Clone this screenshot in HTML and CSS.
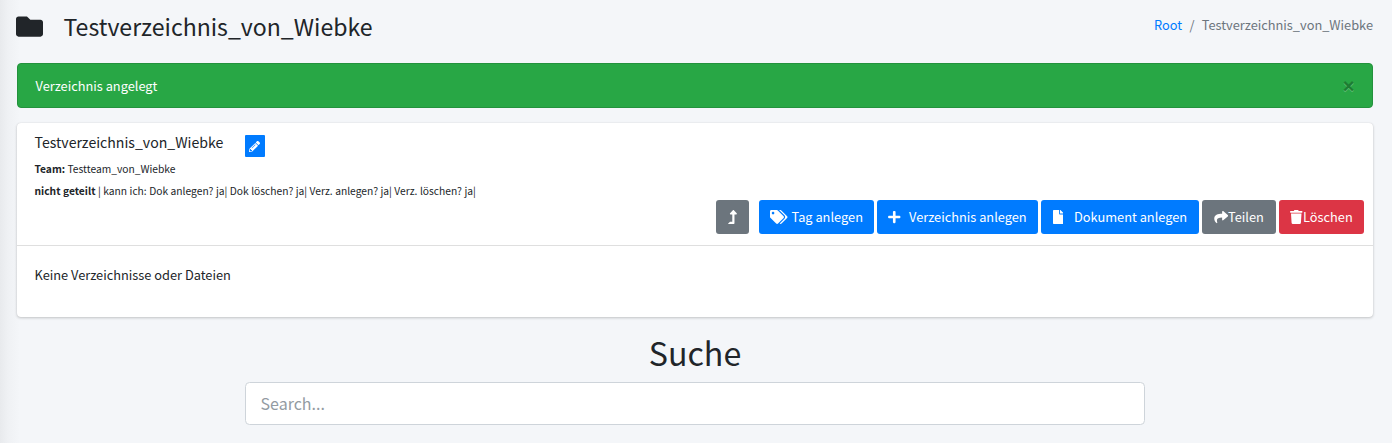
FILE: index.html
```html
<!DOCTYPE html>
<html lang="de">
<head>
<meta charset="utf-8">
<title>Testverzeichnis_von_Wiebke</title>
<link rel="stylesheet" href="styles.css">
</head>
<body>
<main class="content">
  <header class="page-header">
    <svg class="folder" viewBox="0 0 512 512"><path d="M464 128H272l-64-64H48C21.49 64 0 85.49 0 112v288c0 26.51 21.49 48 48 48h416c26.51 0 48-21.49 48-48V176c0-26.51-21.49-48-48-48z"/></svg>
    <h1 class="page-title"><span>Testverzeichnis_von_Wiebke</span></h1>
    <nav class="breadcrumb"><a href="#">Root</a><span class="sep">/</span><span>Testverzeichnis_von_Wiebke</span></nav>
  </header>

  <div class="alert"><span>Verzeichnis angelegt</span><button class="close" type="button">×</button></div>

  <section class="card">
    <div class="card-header">
      <div class="card-title-row">
        <h3 class="card-title">Testverzeichnis_von_Wiebke</h3>
        <a class="edit" href="#"><svg viewBox="0 0 512 512"><path d="M497.9 142.1l-46.1 46.1c-4.7 4.7-12.3 4.7-17 0l-111-111c-4.7-4.7-4.7-12.3 0-17l46.1-46.1c18.7-18.7 49.1-18.7 67.9 0l60.1 60.1c18.8 18.7 18.8 49.1 0 67.9zM284.2 99.8L21.6 362.4.4 483.9c-2.9 16.4 11.4 30.6 27.8 27.8l121.5-21.3 262.6-262.6c4.7-4.7 4.7-12.3 0-17l-111-111c-4.8-4.7-12.4-4.7-17.1 0zM124.1 339.9c-5.5-5.5-5.5-14.3 0-19.8l154-154c5.5-5.5 14.3-5.5 19.8 0s5.5 14.3 0 19.8l-154 154c-5.5 5.5-14.3 5.5-19.8 0zM88 424h48v36.3l-64.5 11.3-31.1-31.1L51.7 376H88v48z"/></svg></a>
      </div>
      <p class="meta team"><b>Team:</b> Testteam_von_Wiebke</p>
      <p class="meta rights"><b>nicht geteilt</b> | kann ich: Dok anlegen? ja| Dok löschen? ja| Verz. anlegen? ja| Verz. löschen? ja|</p>
      <div class="actions">
        <a class="btn secondary up" href="#"><svg class="w-up" viewBox="0 0 320 512"><path d="M313.553 119.669L209.587 7.666c-9.485-10.214-25.676-10.229-35.174 0L70.438 119.669C56.232 134.969 67.062 160 88.025 160H152v272H68.024a11.996 11.996 0 0 0-8.485 3.515l-56 56C-4.021 499.074 1.333 512 12.024 512H208c13.255 0 24-10.745 24-24V160h63.966c20.878 0 31.851-24.969 17.587-40.331z"/></svg></a>
        <a class="btn primary tag" href="#"><svg class="w-tags" viewBox="0 0 640 512"><path d="M497.941 225.941L286.059 14.059A48 48 0 0 0 252.118 0H48C21.49 0 0 21.49 0 48v204.118a48 48 0 0 0 14.059 33.941l211.882 211.882c18.744 18.745 49.136 18.746 67.882 0l204.118-204.118c18.745-18.745 18.745-49.137 0-67.882zM112 160c-26.51 0-48-21.49-48-48s21.49-48 48-48 48 21.49 48 48-21.49 48-48 48zm513.941 133.823L421.823 497.941c-18.745 18.745-49.137 18.745-67.882 0l-.36-.36L527.64 323.522c16.999-16.999 26.362-39.6 26.362-63.64s-9.362-46.641-26.362-63.64L331.397 0h48.721a48 48 0 0 1 33.941 14.059l211.882 211.882c18.745 18.745 18.745 49.137 0 67.882z"/></svg><span>Tag anlegen</span></a>
        <a class="btn primary dir" href="#"><svg class="w-plus" viewBox="0 0 448 512"><path d="M416 208H272V64c0-17.67-14.33-32-32-32h-32c-17.67 0-32 14.33-32 32v144H32c-17.67 0-32 14.33-32 32v32c0 17.67 14.33 32 32 32h144v144c0 17.67 14.33 32 32 32h32c17.67 0 32-14.33 32-32V304h144c17.67 0 32-14.33 32-32v-32c0-17.67-14.33-32-32-32z"/></svg><span>Verzeichnis anlegen</span></a>
        <a class="btn primary doc" href="#"><svg class="w-file" viewBox="0 0 384 512"><path d="M224 136V0H24C10.7 0 0 10.7 0 24v464c0 13.3 10.7 24 24 24h336c13.3 0 24-10.7 24-24V160H248c-13.2 0-24-10.8-24-24zm160-14.1v6.1H256V0h6.1c6.4 0 12.5 2.5 17 7l97.9 98c4.5 4.5 7 10.6 7 16.9z"/></svg><span>Dokument anlegen</span></a>
        <a class="btn secondary share" href="#"><svg class="w-share" viewBox="0 0 512 512"><path d="M503.691 189.836L327.687 37.851C312.281 24.546 288 35.347 288 56.015v80.053C127.371 137.907 0 170.1 0 322.326c0 61.441 39.581 122.309 83.333 154.132 13.653 9.931 33.111-2.533 28.077-18.631C66.066 312.814 132.917 274.316 288 272.085V360c0 20.7 24.3 31.453 39.687 18.164l176.004-152c11.071-9.562 11.086-26.753 0-36.328z"/></svg><span>Teilen</span></a>
        <a class="btn danger trash" href="#"><svg class="w-trash" viewBox="0 0 448 512"><path d="M432 32H312l-9.4-18.7A24 24 0 0 0 281.1 0H166.8a23.72 23.72 0 0 0-21.4 13.3L136 32H16A16 16 0 0 0 0 48v32a16 16 0 0 0 16 16h416a16 16 0 0 0 16-16V48a16 16 0 0 0-16-16zM53.2 467a48 48 0 0 0 47.9 45h245.8a48 48 0 0 0 47.9-45L416 128H32z"/></svg><span>Löschen</span></a>
      </div>
    </div>
    <div class="card-body">Keine Verzeichnisse oder Dateien</div>
  </section>

  <section class="search">
    <h2 class="search-title">Suche</h2>
    <input class="search-input" type="text" placeholder="Search...">
  </section>
</main>
</body>
</html>
```
FILE: styles.css
```css
* { box-sizing: border-box; }
body {
  margin: 0;
  height: 443px;
  overflow: hidden;
  background: linear-gradient(to right, #e8eaed 0, #eff1f4 8px, #f4f6f9 20px);
  color: #212529;
  font-family: "Noto Sans CJK SC", "Noto Sans", sans-serif;
  font-size: 12.8px;
  line-height: 21px;
}
a { text-decoration: none; color: #007bff; }
h1, h2, h3, p { margin: 0; font-weight: 400; }
svg { fill: currentColor; display: block; flex: none; }

.content { padding: 0 19px 0 17px; }
.page-header { display: flex; height: 63px; align-items: flex-start; }
.folder { width: 27px; height: 27px; margin: 13px 20.5px 0 -1px; }
.page-title { font-size: 23.1px; line-height: 30px; margin-top: 11px; }
.breadcrumb { display: flex; margin: 14px 0 0 auto; color: #6c757d; }
.sep { margin: 0 7.3px; }

.alert {
  display: flex;
  justify-content: space-between;
  align-items: center;
  height: 45px;
  padding: 0 17.5px;
  border: 1px solid #23923d;
  border-radius: 4px;
  background: #28a745;
  color: #fff;
}
.close {
  border: 0;
  padding: 0;
  background: none;
  color: #000;
  opacity: .25;
  font: 700 20px/20px "Liberation Sans", sans-serif;
  text-shadow: 0 1px 0 #fff;
}

.card {
  height: 194px;
  margin-top: 15px;
  border-radius: 4px;
  background: #fff;
  box-shadow: 0 0 1px rgba(0, 0, 0, .125), 0 1px 3px rgba(0, 0, 0, .2);
}
.card-header {
  height: 123px;
  padding: 10px 9px 0 17.5px;
  border-bottom: 1px solid rgba(0, 0, 0, .125);
}
.card-title-row { display: flex; align-items: flex-start; height: 25px; }
.card-title { width: 188.5px; font-size: 14.12px; line-height: 18px; white-space: nowrap; }
.edit {
  display: flex;
  align-items: center;
  justify-content: center;
  width: 20px;
  height: 22px;
  margin: 2px 0 0 22px;
  padding-right: 1px;
  border-radius: 1px;
  background: #007bff;
  color: #fff;
}
.edit svg { width: 11px; height: 11px; }
.meta { font-size: 10.25px; line-height: 22px; }
.rights { word-spacing: .2px; }
.actions { display: flex; justify-content: flex-end; margin-top: -2px; }
.btn {
  display: flex;
  align-items: center;
  height: 34px;
  padding-left: 11px;
  margin-left: 3px;
  border-radius: 3px;
  color: #fff;
  white-space: nowrap;
}
.btn span { margin-top: -2px; }
.primary { background: #007bff; }
.secondary { background: #6c757d; }
.danger { background: #dc3545; }
.up { width: 33px; margin-right: 7px; padding-left: 12px; }
.tag { width: 115px; }
.dir { width: 161px; }
.doc { width: 158px; padding-left: 11.5px; }
.share { width: 74px; padding-left: 11.5px; }
.trash { width: 85px; }
.btn svg { height: 14px; margin-top: -1px; }
.w-up { width: 9px; }
.w-tags { width: 17.5px; margin-right: 4px; }
.w-plus { width: 12.5px; margin-right: 8.5px; }
.w-file { width: 10.5px; margin-right: 11px; }
.w-share { width: 14.5px; }
.w-trash { width: 12.5px; margin-right: .5px; }
.card-body { padding: 18px 17.5px; }

.search { width: 900px; margin: 16px 0 0 228px; }
.search-title { font-size: 32.2px; line-height: 39px; text-align: center; }
.search-input {
  display: block;
  width: 100%;
  height: 43px;
  margin-top: 10px;
  padding: 0 14px 2px 14.5px;
  border: 1px solid #ced4da;
  border-radius: 4.5px;
  background: #fff;
  font: 16px "Noto Sans CJK SC", sans-serif;
}
.search-input::placeholder { color: #939ba2; opacity: 1; }
```
